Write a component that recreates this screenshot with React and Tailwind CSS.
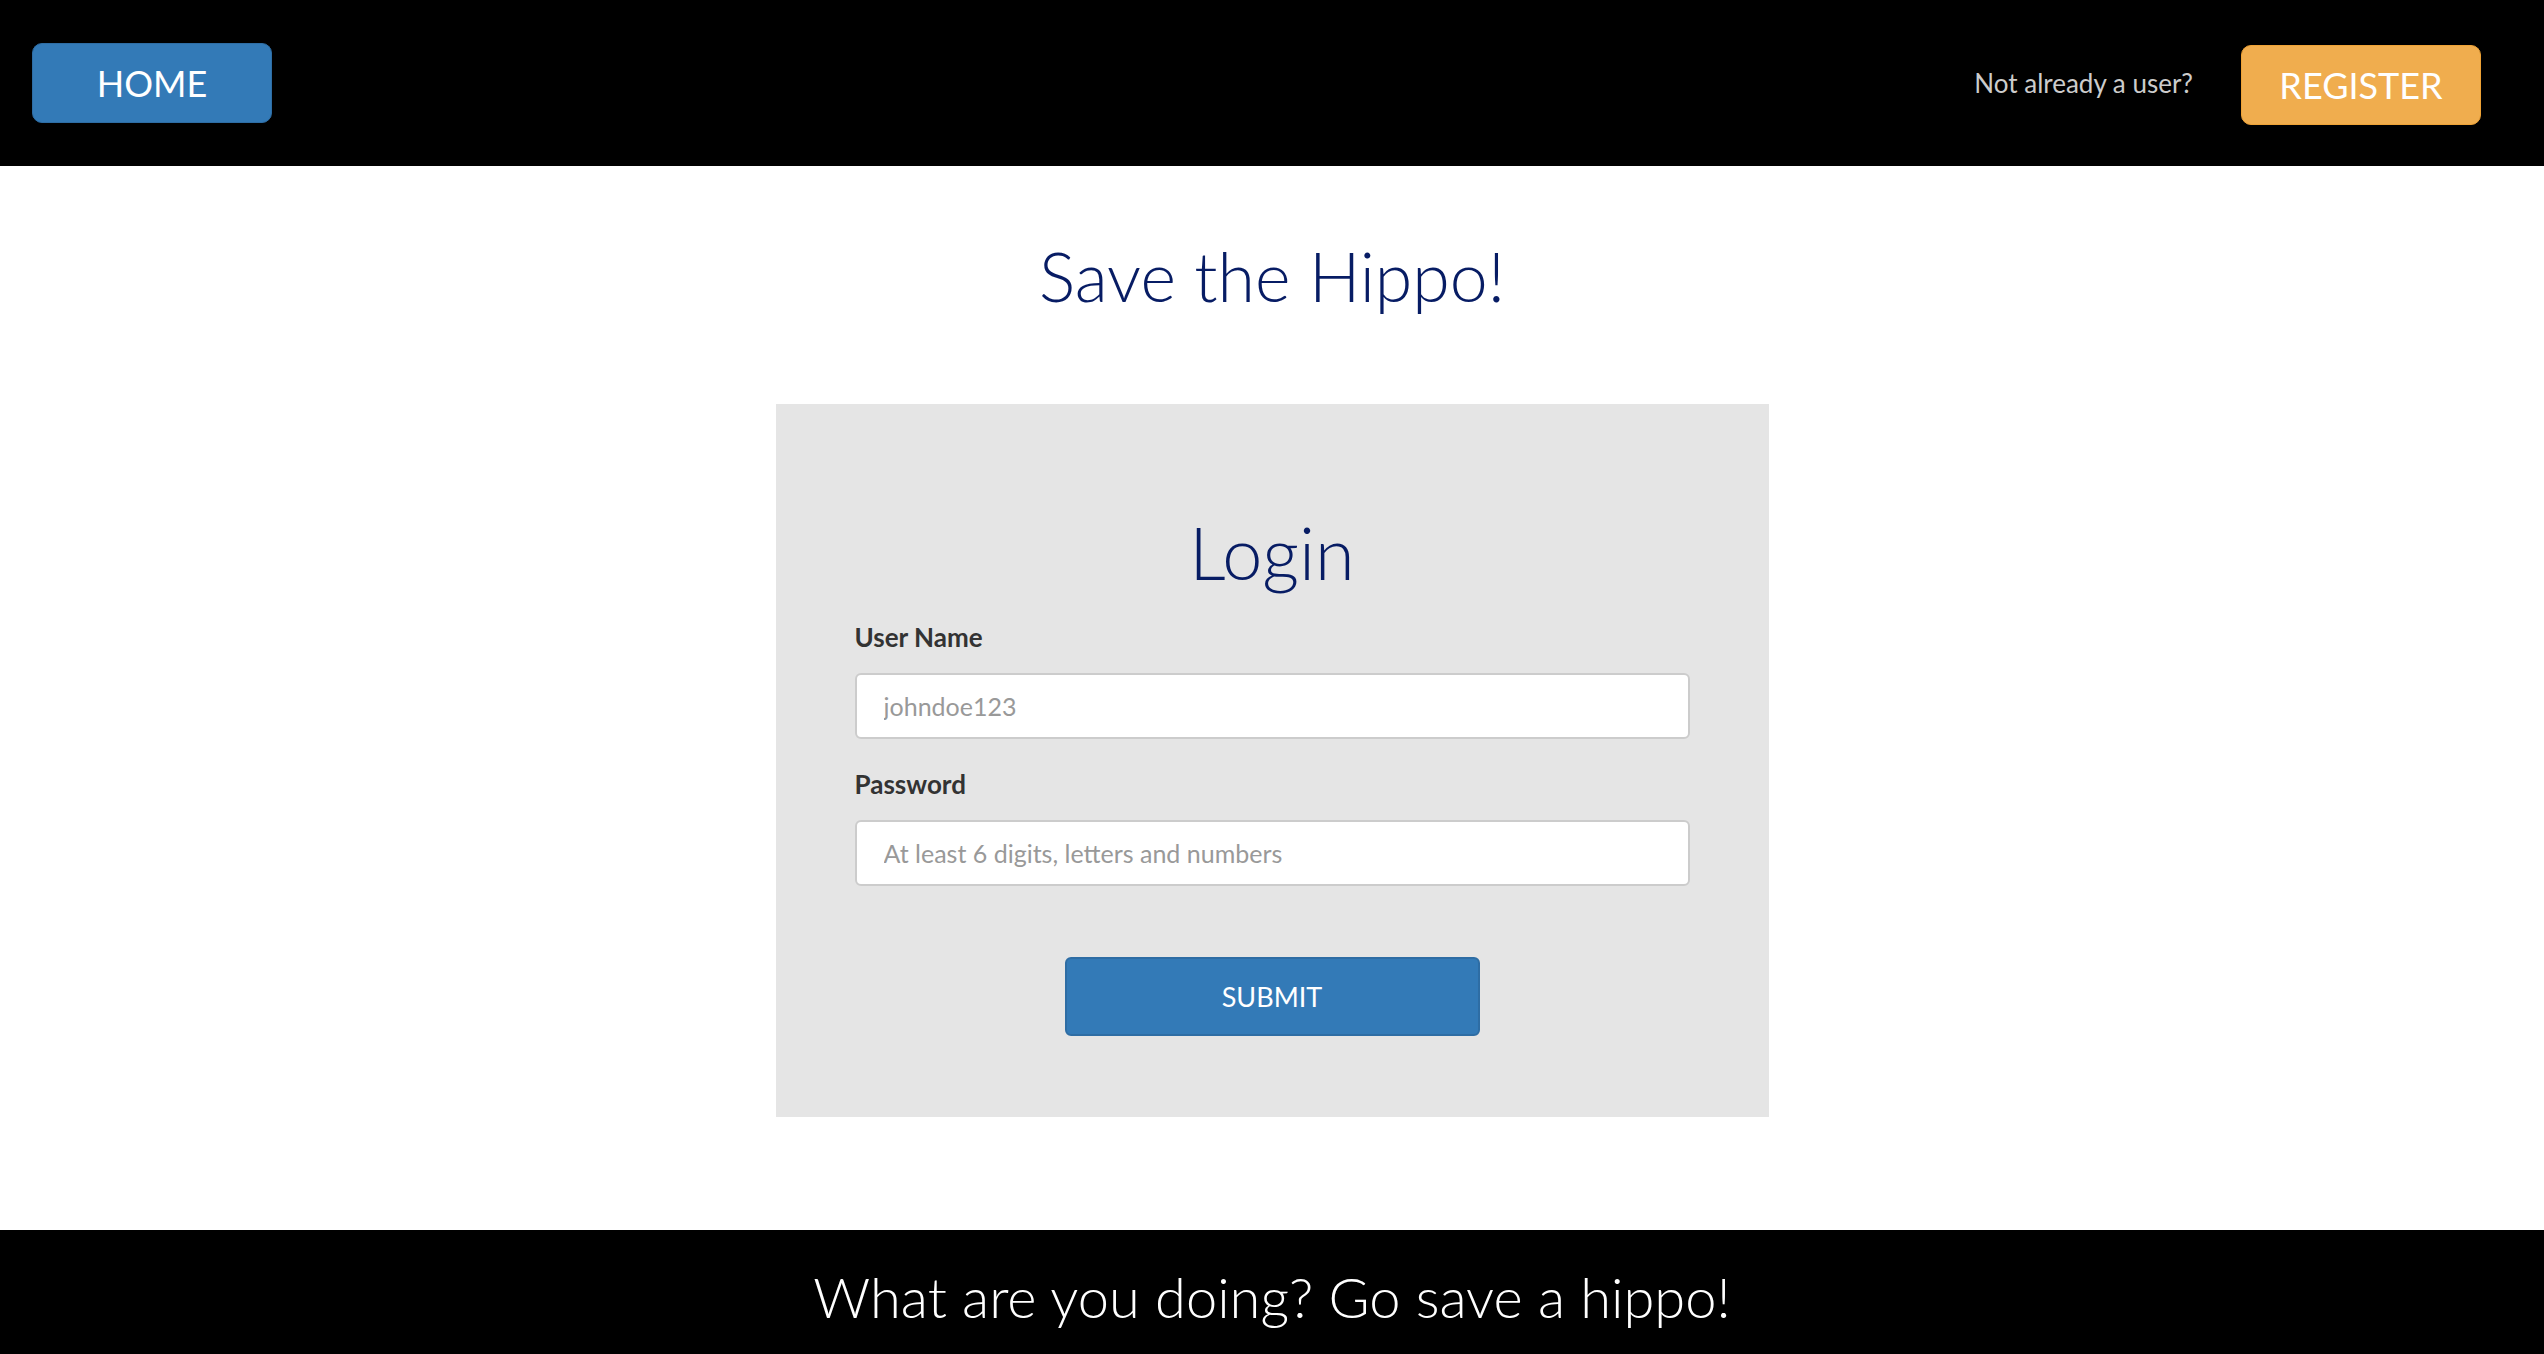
import React from 'react';

export default function App() {
  return (
    <div className="min-h-screen flex flex-col bg-white font-['Lato',sans-serif]">
      {/* Top bar */}
      <header className="h-[166px] bg-black flex items-center justify-between pl-[32px] pr-[63px]">
        <button className="w-[240px] h-[80px] rounded-[10px] bg-[#337ab7] border border-[#2e6da4] text-white text-[36px] leading-none">
          HOME
        </button>
        <div className="flex items-center gap-[48px]">
          <span className="text-[#cccccc] text-[26px] leading-none">Not already a user?</span>
          <button className="w-[240px] h-[80px] rounded-[10px] bg-[#f0ad4e] border border-[#eea236] text-white text-[36px] leading-none mt-[4px]">
            REGISTER
          </button>
        </div>
      </header>

      {/* Main */}
      <main className="flex-1 flex flex-col items-center">
        <h1 className="mt-[76px] text-[68px] leading-none text-[#071c64] font-light">Save the Hippo!</h1>

        <form className="mt-[94px] w-[993px] bg-[#e5e5e5] px-[79px] pt-[112px] pb-[81px] flex flex-col">
          <h2 className="text-center text-[72px] leading-none text-[#071c64] font-light">Login</h2>

          <label className="mt-[36px] text-[26px] leading-none font-bold text-[#333333]">User Name</label>
          <input
            type="text"
            placeholder="johndoe123"
            className="mt-[23px] h-[66px] w-full bg-white border-2 border-[#cccccc] rounded-[6px] px-[27px] text-[25px] text-[#555555] placeholder:text-[#999999] outline-none"
          />

          <label className="mt-[32px] text-[26px] leading-none font-bold text-[#333333]">Password</label>
          <input
            type="password"
            placeholder="At least 6 digits, letters and numbers"
            className="mt-[23px] h-[66px] w-full bg-white border-2 border-[#cccccc] rounded-[6px] px-[27px] text-[25px] text-[#555555] placeholder:text-[#999999] outline-none"
          />

          <button
            type="button"
            className="mt-[71px] self-center w-[415px] h-[79px] rounded-[6px] bg-[#337ab7] border-2 border-[#2e6da4] text-white text-[27px] leading-none"
          >
            SUBMIT
          </button>
        </form>
      </main>

      {/* Footer */}
      <footer className="h-[124px] bg-black flex items-center justify-center pt-[10px]">
        <p className="text-white text-[56px] leading-none font-light">What are you doing? Go save a hippo!</p>
      </footer>
    </div>
  );
}
